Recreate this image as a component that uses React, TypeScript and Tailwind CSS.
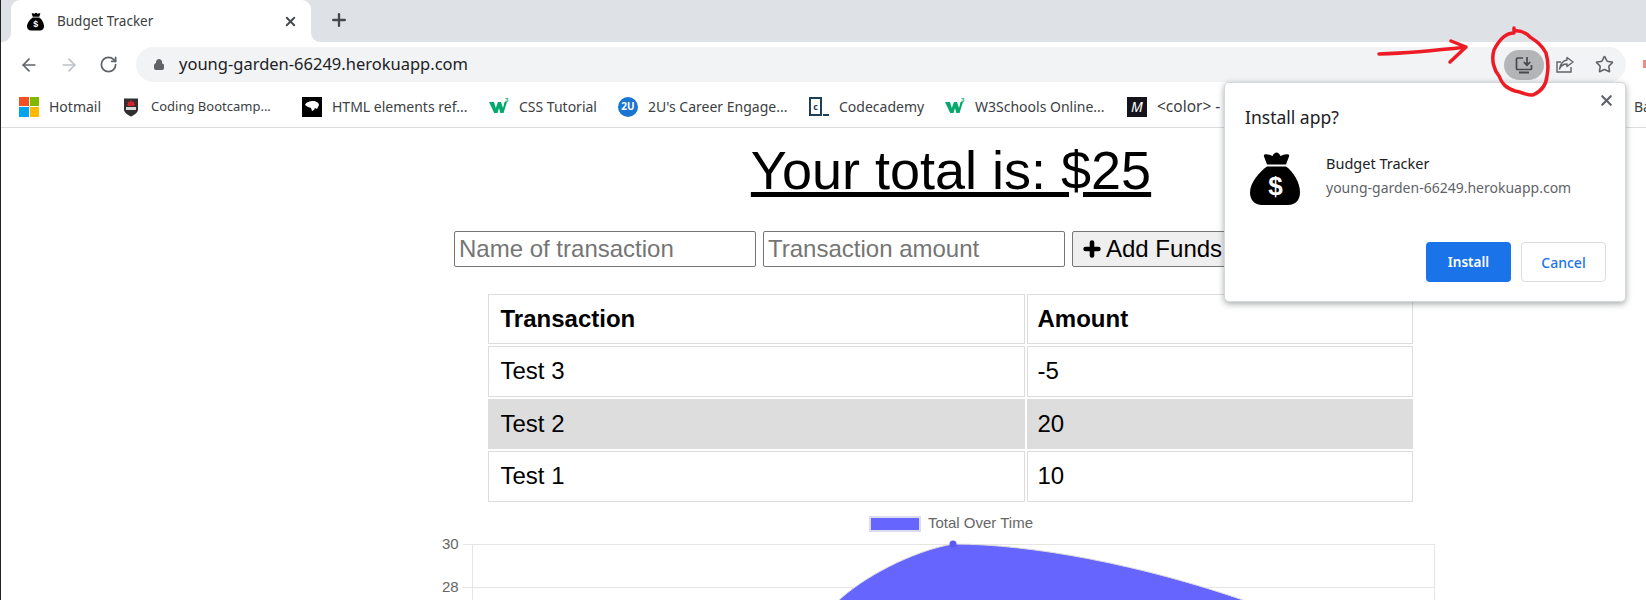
import { ArrowLeft, ArrowRight, RotateCw, Lock, Star, X, Plus } from "lucide-react";

const Bag = ({ className }: { className?: string }) => (
  <svg viewBox="0 0 50 53" className={className}>
    <path fill="#000" d="M14.500 2.500c3-.8 6 .5 8 1.500C23.500 2 25 .5 26.500.5S29.500 2 30.500 4c2-1 5-2.300 8-1.500.8.300.8 1.200.4 2.200L36 12.500H17L14.100 4.700c-.4-1-.4-1.900.4-2.200z" />
    <path fill="#000" d="M17 14.500h19c7 5 14 15.500 14 26 0 7.500-4.500 12.500-12 12.500H12C4.500 53 0 48 0 40.500 0 30 10 19.500 17 14.500z" />
    <text x="25.500" y="43" textAnchor="middle" fontSize="26" fontWeight="700" fill="#fff" fontFamily="Liberation Sans, sans-serif">$</text>
  </svg>
);

const W3 = ({ className }: { className?: string }) => (
  <svg viewBox="0 0 20 20" className={className}>
    <path fill="#04aa6d" d="M0 5h5l1.800 6L9 5h3l2 6 1.500-6H18l-3.500 11h-3.200L10 11l-1.500 5H5.200z" />
    <text x="16" y="5" fontSize="6" fontWeight="700" fill="#04aa6d" fontFamily="Liberation Sans, sans-serif">3</text>
  </svg>
);

const Mark = ({ icon, label, w, t = "text-[14px]" }: { icon: React.ReactNode; label: string; w: string; t?: string }) => (
  <div className={`flex items-center gap-[10px] shrink-0 ${w}`}>
    <span className="w-[20px] h-[20px] flex items-center justify-center shrink-0">{icon}</span>
    <span className={`${t} text-[#3c4043] whitespace-nowrap`}>{label}</span>
  </div>
);

const rows = [
  { n: "Test 3", a: "-5", bg: "" },
  { n: "Test 2", a: "20", bg: "bg-[#dddddd]" },
  { n: "Test 1", a: "10", bg: "" },
];

export default function App() {
  return (
    <div className="relative w-[1646px] h-[600px] overflow-hidden bg-white font-['Noto_Sans',sans-serif]">
      {/* tab strip */}
      <div className="relative h-[42px] bg-[#dee1e6] flex items-end pl-[11px]">
        <div className="w-[300px] h-[42px] bg-white rounded-t-[9px] flex items-center pl-[16px] pr-[13px]">
          <Bag className="w-[17px] h-[19px]" />
          <span className="ml-[13px] text-[13.500px] text-[#3c4043]">Budget Tracker</span>
          <X className="ml-auto w-[15px] h-[15px] text-[#45484d]" strokeWidth={3} />
        </div>
        <Plus className="ml-[18px] mb-[12px] w-[20px] h-[20px] text-[#45484d]" strokeWidth={2.800} />
        {/* tab flares */}
        <span className="absolute left-[311px] top-[33px] w-[9px] h-[9px] bg-white" />
        <span className="absolute left-[311px] top-[33px] w-[9px] h-[9px] bg-[#dee1e6] rounded-bl-[9px]" />
        <span className="absolute left-[2px] top-[33px] w-[9px] h-[9px] bg-white" />
        <span className="absolute left-[2px] top-[33px] w-[9px] h-[9px] bg-[#dee1e6] rounded-br-[9px]" />
      </div>
      {/* toolbar */}
      <div className="h-[46px] flex items-start pt-[5px] relative">
        <ArrowLeft className="ml-[19px] mt-[8px] w-[20px] h-[20px] text-[#5f6368]" strokeWidth={2} />
        <ArrowRight className="ml-[20px] mt-[8px] w-[20px] h-[20px] text-[#bdc1c6]" strokeWidth={2} />
        <RotateCw className="ml-[20px] mt-[8px] w-[19px] h-[19px] text-[#5f6368]" strokeWidth={2.200} />
        <div className="ml-[18px] w-[1490px] h-[35px] rounded-full bg-[#f1f3f4] flex items-center">
          <Lock className="ml-[17px] w-[12px] h-[13px] text-[#5f6368] fill-[#5f6368]" strokeWidth={2} />
          <span className="ml-[14px] text-[16.500px] text-[#202124]">young-garden-66249.herokuapp.com</span>
          <div className="ml-auto flex items-center">
            <div className="w-[40px] h-[30px] rounded-full bg-[#b4b5b6] flex items-center justify-center">
              <svg viewBox="0 0 20 20" className="w-[20px] h-[20px]" fill="none" stroke="#45484d" strokeWidth="1.700">
                <path d="M9 3H3.500a1 1 0 0 0-1 1v9.500a1 1 0 0 0 1 1h13a1 1 0 0 0 1-1V10" />
                <path d="M13 2v8M9.800 7l3.200 3.200L16.200 7" />
                <path d="M5 17.500h10" strokeWidth="2" />
              </svg>
            </div>
            <svg viewBox="0 0 20 20" className="ml-[11px] w-[20px] h-[20px]" fill="none" stroke="#5f6368" strokeWidth="1.400">
              <path d="M16 12v5H2V7h4" />
              <path d="M12 2.500l6 4.500-6 4.500V9C8.500 9 6 10.500 4.500 14 5 9.500 8 5.500 12 5z" strokeLinejoin="round" />
            </svg>
            <Star className="ml-[20px] mr-[12px] w-[19px] h-[19px] text-[#5f6368]" strokeWidth={2} />
          </div>
        </div>
      </div>
      {/* bookmarks */}
      <div className="h-[40px] border-b border-[#dadce0] flex items-center pl-[19px] pb-[2px]">
        <Mark
          w="w-[102px]"
          label="Hotmail"
          icon={
            <span className="grid grid-cols-2 gap-[1px] w-[20px] h-[20px]">
              <span className="bg-[#f25022]" />
              <span className="bg-[#7fba00]" />
              <span className="bg-[#00a4ef]" />
              <span className="bg-[#ffb900]" />
            </span>
          }
        />
        <Mark
          w="w-[181px]"
          t="text-[13px]"
          label="Coding Bootcamp..."
          icon={
            <svg viewBox="0 0 20 20" className="w-[20px] h-[20px]">
              <path fill="#2f2f2f" d="M3 1.500h14v11c0 3.500-4 5.500-7 7-3-1.500-7-3.500-7-7z" />
              <path fill="#d8d8d8" d="M5 10h10v3H5z" />
              <path fill="#d2232a" d="M10 3l1.500 2 2-.5-.5 2.500 1.500.5-2 1.500H7.500l-2-1.500L7 7l-.5-2.500 2 .5z" />
            </svg>
          }
        />
        <Mark
          w="w-[187px]"
          label="HTML elements ref..."
          icon={
            <span className="w-[20px] h-[20px] bg-black flex items-center justify-center">
              <svg viewBox="0 0 20 20" className="w-[20px] h-[20px]">
                <path fill="#fff" d="M3 8c1-3 5-4 8-4 3 0 6 2 6 4l-2 4-2-1-1 2-2 1-1-3-3-1z" />
              </svg>
            </span>
          }
        />
        <Mark w="w-[129px]" label="CSS Tutorial" icon={<W3 className="w-[20px] h-[20px]" />} />
        <Mark
          w="w-[191px]"
          label="2U's Career Engage..."
          icon={
            <span className="w-[20px] h-[20px] rounded-full bg-[#1b75d0] text-white text-[10px] font-bold flex items-center justify-center">2U</span>
          }
        />
        <Mark
          w="w-[136px]"
          label="Codecademy"
          icon={
            <span className="relative w-[20px] h-[20px] flex items-center">
              <span className="w-[13px] h-[19px] border-2 border-[#1f4056] text-[#1f4056] text-[9px] font-bold flex items-center justify-center">c</span>
              <span className="ml-[1px] mt-[17px] w-[6px] h-[2px] bg-[#1f4056]" />
            </span>
          }
        />
        <Mark w="w-[182px]" label="W3Schools Online..." icon={<W3 className="w-[20px] h-[20px]" />} />
        <Mark
          w="w-[507px]"
          t="text-[15.500px]"
          label="<color> - CSS"
          icon={
            <span className="w-[20px] h-[20px] bg-[#15141a] flex items-center justify-center text-white text-[14px] italic leading-none">M</span>
          }
        />
        <span className="text-[14px] text-[#3c4043] whitespace-nowrap">Ba</span>
      </div>

      {/* page */}
      <main className="ml-[442px] w-[1018px] flex flex-col items-center font-['Liberation_Sans',sans-serif] text-black">
        <h1 className="mt-[7px] h-[70px] text-[54px] leading-[70px] underline">Your total is: $25</h1>
        <div className="mt-[26px] self-start ml-[12px] flex gap-[7px] items-stretch">
          <input placeholder="Name of transaction" className="w-[302px] h-[36px] border border-[#767676] rounded-[2px] px-[4px] text-[24px] placeholder:text-[#757575]" />
          <input placeholder="Transaction amount" className="w-[302px] h-[36px] border border-[#767676] rounded-[2px] px-[4px] text-[24px] placeholder:text-[#757575]" />
          <button className="w-[170px] h-[36px] border border-[#767676] bg-[#efefef] rounded-[2px] pl-[8px] flex items-center text-[24px] text-black">
            <Plus className="w-[22px] h-[22px]" strokeWidth={5} />
            <span className="ml-[3px]">Add Funds</span>
          </button>
        </div>
        <table className="mt-[25px] -ml-[2px] w-[929px] table-fixed border-separate border-spacing-[2px] text-[24px]">
          <colgroup>
            <col className="w-[537px]" />
            <col />
          </colgroup>
          <thead>
            <tr>
              <th className="h-[50px] border border-[#dddddd] pl-[12px] text-left font-bold">Transaction</th>
              <th className="h-[50px] border border-[#dddddd] pl-[10px] text-left font-bold">Amount</th>
            </tr>
          </thead>
          <tbody>
            {rows.map((r) => (
              <tr key={r.n}>
                <td className={`h-[50.500px] border border-[#dddddd] pl-[12px] ${r.bg}`}>{r.n}</td>
                <td className={`h-[50.500px] border border-[#dddddd] pl-[10px] ${r.bg}`}>{r.a}</td>
              </tr>
            ))}
          </tbody>
        </table>
        <div className="mt-[11px] flex items-center self-start ml-[427px] h-[18px] text-[15px] text-[#666666]">
          <span className="w-[52px] h-[16px] bg-[#6666ff] border-2 border-[#dcdcf5]" />
          <span className="ml-[7px]">Total Over Time</span>
        </div>
        <svg viewBox="0 0 1018 70" className="w-[1018px] h-[70px] shrink-0">
          <g stroke="#e5e5e5" strokeWidth="1">
            <path d="M21 11.500H992M21 54.500H992M30.500 11V70M992.500 11V70" fill="none" />
          </g>
          <path d="M396 68 C 420 45 470 18 511 11 C 590 11 700 32 804 68 V 70 H 396 Z" fill="#6666ff" stroke="#dcdcdc" strokeWidth="1" />
          <circle cx="511" cy="11" r="3.500" fill="#5a5aee" />
          <g fill="#666666" fontSize="15" fontFamily="Liberation Sans, sans-serif">
            <text x="0" y="16">30</text>
            <text x="0" y="59">28</text>
          </g>
        </svg>
      </main>

      {/* popup */}
      <div className="absolute left-[1224px] top-[82px] w-[402px] h-[220px] bg-white rounded-[5px] border border-[#d5d7da] shadow-[0_2px_6px_rgba(60,64,67,0.45)] flex flex-col pl-[20px] pr-[19px] text-[#202124]">
        <div className="mt-[23px] flex items-center justify-between">
          <span className="text-[17.500px] leading-[22px]">Install app?</span>
          <X className="-mt-[33px] -mr-[9px] w-[17px] h-[17px] text-[#5f6368]" strokeWidth={3} />
        </div>
        <div className="mt-[24px] flex items-start">
          <Bag className="ml-[5px] w-[50px] h-[53px]" />
          <div className="ml-[26px] flex flex-col">
            <span className="text-[14.500px] leading-[18px] mt-[2px]">Budget Tracker</span>
            <span className="text-[14px] leading-[18px] mt-[7px] text-[#5f6368]">young-garden-66249.herokuapp.com</span>
          </div>
        </div>
        <div className="mt-auto mb-[19px] flex justify-end gap-[10px]">
          <button className="w-[85px] h-[40px] rounded-[4px] bg-[#1a73e8] text-white text-[13.500px] font-semibold">Install</button>
          <button className="w-[85px] h-[40px] rounded-[4px] border border-[#dadce0] bg-white text-[#1a73e8] text-[14px] font-medium">Cancel</button>
        </div>
      </div>

      {/* red annotations */}
      <svg viewBox="0 0 1646 600" className="absolute left-0 top-0 w-[1646px] h-[600px] pointer-events-none" fill="none" stroke="#ed1c24" strokeWidth="3.500" strokeLinejoin="round" strokeLinecap="round">
        <path d="M1379 54 C 1410 53 1440 50 1466 47 M1451 41 L1466 47 L1450 62" />
        <path d="M1514 28 L1514 33 C 1505 33 1498 42 1494 50 C 1491 60 1494 70 1499 76 C 1502 84 1506 88 1515 91 C 1522 92 1528 96 1533 95 C 1540 92 1546 86 1547 76 C 1549 66 1548 60 1546 53 C 1541 44 1536 41 1530 37 C 1526 33 1520 30 1514 31" />
      </svg>
      <span className="absolute left-[1643px] top-[60px] w-[3px] h-[8px] bg-[#f28b82]" />
      <span className="absolute left-0 top-0 w-[1px] h-[600px] bg-[#222]" />
    </div>
  );
}
